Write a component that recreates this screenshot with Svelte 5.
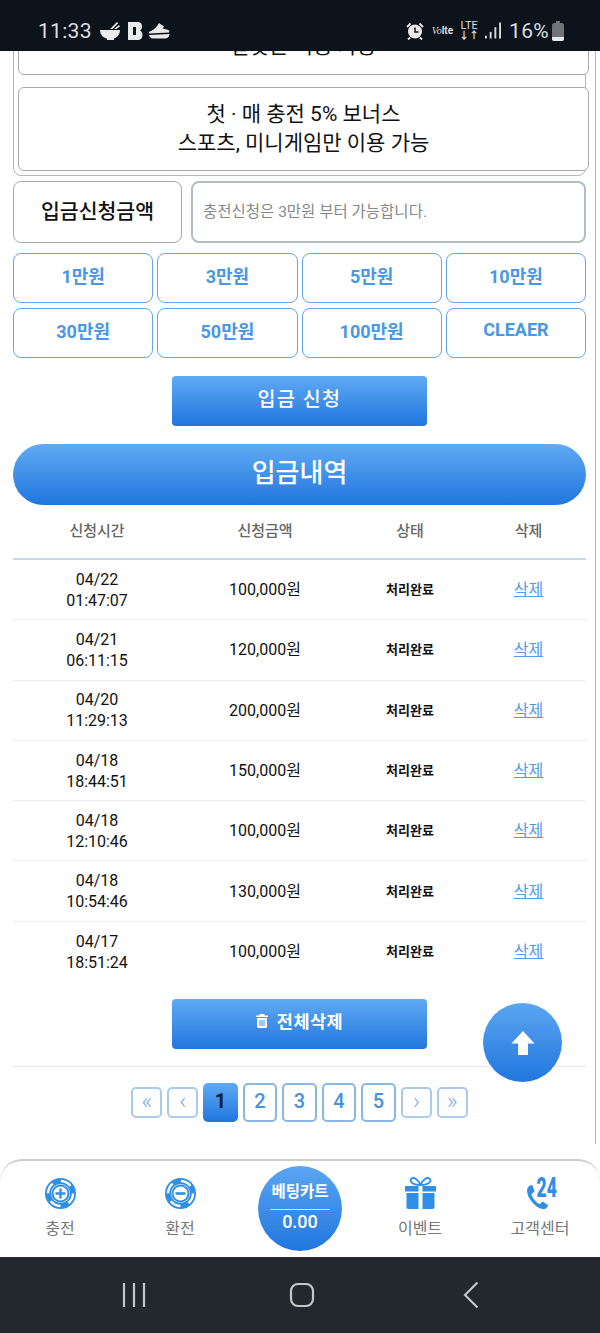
<script>
    const amounts = ["1만원", "3만원", "5만원", "10만원", "30만원", "50만원", "100만원", "CLEAER"];
    const rows = [
        ["04/22", "01:47:07", "100,000원"],
        ["04/21", "06:11:15", "120,000원"],
        ["04/20", "11:29:13", "200,000원"],
        ["04/18", "18:44:51", "150,000원"],
        ["04/18", "12:10:46", "100,000원"],
        ["04/18", "10:54:46", "130,000원"],
        ["04/17", "18:51:24", "100,000원"],
    ];
    const pages = ["1", "2", "3", "4", "5"];
</script>

<div class="phone">
    <div class="status">
        <div class="status-left">
            <span class="clock">11:33</span>
            <svg width="24" height="20" viewBox="0 0 24 20" fill="#e8eaec">
                <path d="M1 9h20c0 5-3 7.500-6 8.500v1.500H8v-1.500C4 16.500 1 14 1 9z"/>
                <path d="M11 8l7-7 1.200 1.200L13.500 8zM15 8l5-4 1 1.300L17.500 8z"/>
            </svg>
            <svg width="15" height="20" viewBox="0 0 15 20">
                <path d="M0 1h9c4 0 5 2 5 4.500 0 2-1 3.500-2 4 1.500.7 2.500 2 2.500 4.500 0 3-2 5-5 5H0z" fill="#e8eaec"/>
                <rect x="5" y="6" width="3" height="8" fill="#0d131a"/>
            </svg>
            <svg width="22" height="18" viewBox="0 0 22 18" fill="#e8eaec">
                <path d="M11 1l5 3.500-1.500 2 6 1.500c1 .8 1 2 .5 2.500L1 11.500c-.3-.8-.2-1.500.3-2 3.500-.5 7-4 9.700-8.500z"/>
                <path d="M1 13l20.500-1c0 2.500-1.500 4-4 4.500H5c-2 0-3.500-1.500-4-3.500z"/>
            </svg>
        </div>
        <div class="status-right">
            <svg width="18" height="18" viewBox="0 0 18 18">
                <circle cx="9" cy="9.500" r="7" fill="#e8eaec"/>
                <path d="M9 5.500v4.500h3.500" fill="none" stroke="#0d131a" stroke-width="1.500"/>
                <path d="M1 5l3.500-3.500M17 5l-3.500-3.500M4 15.500l-2 2M14 15.500l2 2" stroke="#e8eaec" stroke-width="1.800"/>
            </svg>
            <span class="volte"><i>Vo</i>lte</span>
            <span class="lte">LTE<small>↓↑</small></span>
            <svg class="signal" width="16" height="17" viewBox="0 0 17 17" fill="#d8dbde">
                <rect x="0" y="14" width="2" height="3"/>
                <rect x="5" y="10" width="2" height="7"/>
                <rect x="10" y="5" width="2" height="12"/>
                <rect x="15" y="0" width="2" height="17"/>
            </svg>
            <span class="clock">16%</span>
            <svg class="battery" width="12" height="20" viewBox="0 0 12 20">
                <path d="M4 0h4v2h2c1 0 2 1 2 2v14c0 1-1 2-2 2H2c-1 0-2-1-2-2V4c0-1 1-2 2-2h2z" fill="#6f7478"/>
                <path d="M0 16h12v2c0 1-1 2-2 2H2c-1 0-2-1-2-2z" fill="#e8eaec"/>
            </svg>
        </div>
    </div>

    <div class="viewport">
        <main>
            <div class="notice-box">
                <div class="notice notice-first">알맞은 이용 가능</div>
                <div class="notice">첫 · 매 충전 5% 보너스<br/>스포츠, 미니게임만 이용 가능</div>
            </div>

            <div class="amount-row">
                <div class="amount-label">입금신청금액</div>
                <input class="amount-input" placeholder="충전신청은 3만원 부터 가능합니다."/>
            </div>

            <div class="amount-grid">
                {#each amounts as a}
                    <button class="amount-btn">{a}</button>
                {/each}
            </div>

            <button class="action">입금 신청</button>

            <div class="pill">입금내역</div>

            <div class="tr th">
                <div>신청시간</div>
                <div>신청금액</div>
                <div>상태</div>
                <div>삭제</div>
            </div>
            {#each rows as r, i}
                <div class="tr" class:last={i === rows.length - 1}>
                    <div class="when">{r[0]}<br/>{r[1]}</div>
                    <div class="money">{r[2]}</div>
                    <div class="state">처리완료</div>
                    <div class="del"><a href="#del">삭제</a></div>
                </div>
            {/each}

            <button class="action action-del">
                <svg width="12" height="14" viewBox="0 0 12 14">
                    <path d="M0 1.500h3.500V0h5v1.500H12V3H0zM1 4h10v8.500c0 .8-.7 1.500-1.500 1.500h-7C1.700 14 1 13.300 1 12.500z" fill="#fff"/>
                    <path d="M4 6v6M6 6v6M8 6v6" stroke="#3f8fe8" stroke-width="1"/>
                </svg>
                전체삭제
            </button>

            <hr/>

            <div class="pager">
                <span class="pg">«</span>
                <span class="pg">‹</span>
                {#each pages as p, i}
                    <span class="pg num" class:active={i === 0}>{p}</span>
                {/each}
                <span class="pg">›</span>
                <span class="pg">»</span>
            </div>
        </main>

        <button class="to-top" aria-label="top">
            <svg width="24" height="26" viewBox="0 0 24 26">
                <path d="M12 1l11.500 12.500H17V25H7V13.500H.5z" fill="#fff"/>
            </svg>
        </button>
    </div>

    <nav>
        <div class="nav-item">
            <svg width="33" height="33" viewBox="0 0 33 33">
                <circle cx="16.500" cy="16.500" r="15.500" fill="#2f8fe8"/>
                <circle cx="16.500" cy="16.500" r="12.500" fill="none" stroke="#fff" stroke-width="2.400" stroke-dasharray="11 8.630"/>
                <circle cx="16.500" cy="16.500" r="9.500" fill="#fff"/>
                <circle cx="16.500" cy="16.500" r="8" fill="none" stroke="#2f8fe8" stroke-width="2"/>
                <path d="M16.500 11.500v10M11.500 16.500h10" stroke="#2f8fe8" stroke-width="2.400"/>
            </svg>
            <span>충전</span>
        </div>
        <div class="nav-item">
            <svg width="33" height="33" viewBox="0 0 33 33">
                <circle cx="16.500" cy="16.500" r="15.500" fill="#2f8fe8"/>
                <circle cx="16.500" cy="16.500" r="12.500" fill="none" stroke="#fff" stroke-width="2.400" stroke-dasharray="11 8.630"/>
                <circle cx="16.500" cy="16.500" r="9.500" fill="#fff"/>
                <circle cx="16.500" cy="16.500" r="8" fill="none" stroke="#2f8fe8" stroke-width="2"/>
                <path d="M11.500 16.500h10" stroke="#2f8fe8" stroke-width="2.600"/>
            </svg>
            <span>환전</span>
        </div>
        <div class="nav-item">
            <div class="cart">
                <b>베팅카트</b>
                <em>0.00</em>
            </div>
        </div>
        <div class="nav-item">
            <svg width="33" height="33" viewBox="0 0 33 33">
                <path d="M16.500 8C14 2 10 0 7.500 1.500 5 3 7 8 16.500 8zM16.500 8C19 2 23 0 25.500 1.500 28 3 26 8 16.500 8z" fill="none" stroke="#2f8fe8" stroke-width="1.800"/>
                <path d="M1 9h13.500v5.500H1zM18.500 9H32v5.500H18.500zM2.500 16h12v16h-10c-1.200 0-2-.8-2-2zM18.500 16h12v14c0 1.200-.8 2-2 2h-10z" fill="#2f8fe8"/>
            </svg>
            <span>이벤트</span>
        </div>
        <div class="nav-item">
            <div class="phone-icon">
                <svg width="25" height="27" viewBox="0 0 25 30">
                    <path d="M5 2.500C2 4 .5 6 1 10c1 8 9 17 17 19 3 .5 5-1 6-3.500.3-1-.1-1.500-1-2l-4-2.500c-.8-.5-1.500-.3-2 .3L15.500 23c-.6.6-1 .6-1.700.1C10 20.500 7.500 17 6 13.500c-.3-.7-.2-1.200.4-1.700l2-1.500c.7-.5.8-1.200.5-2L7 3c-.4-.9-1.100-1-2-.5z" fill="#2f8fe8"/>
                </svg>
                <span class="h24">24</span>
            </div>
            <span>고객센터</span>
        </div>
    </nav>

    <div class="sysnav">
        <svg width="24" height="26" viewBox="0 0 24 26" stroke="#c4c6c8" stroke-width="2.200">
            <path d="M2 1v24M12 1v24M22 1v24"/>
        </svg>
        <svg width="26" height="26" viewBox="0 0 26 26">
            <rect x="2" y="2" width="22" height="22" rx="7" fill="none" stroke="#c4c6c8" stroke-width="2.200"/>
        </svg>
        <svg width="16" height="28" viewBox="0 0 16 28">
            <path d="M14.500 1.500L2 14l12.500 12.500" fill="none" stroke="#c4c6c8" stroke-width="2.200"/>
        </svg>
    </div>
</div>

<style>
    :global(body) {
        background: #fff;
    }

    .phone {
        width: 600px;
        height: 1333px;
        display: flex;
        flex-direction: column;
        overflow: hidden;
        font-family: Roboto, "Noto Sans CJK KR", sans-serif;
        color: #111;
        background: #fff;
    }

    .status {
        height: 51px;
        flex: none;
        display: flex;
        justify-content: space-between;
        align-items: center;
        padding: 10px 36px 0 38px;
        box-sizing: border-box;
        background: #0d131a;
        color: #dcdfe2;
        position: relative;
        z-index: 2;
    }

    .status-left,
    .status-right {
        display: flex;
        align-items: center;
        gap: 5px;
    }

    .status-right {
        gap: 0;
    }

    .clock {
        font-size: 21px;
        letter-spacing: 0.3px;
    }

    .status-left .clock {
        margin-right: 2px;
    }

    .volte {
        font-size: 10px;
        font-weight: 700;
        margin: 0 6px 0 8px;
    }

    .volte i {
        font-weight: 400;
        font-family: "Liberation Serif", serif;
    }

    .lte {
        display: flex;
        flex-direction: column;
        align-items: center;
        font-size: 11px;
        line-height: 11px;
        margin-right: 6px;
    }

    .lte small {
        font-size: 10px;
        font-weight: 700;
        line-height: 10px;
    }

    .signal {
        margin-right: 8px;
    }

    .battery {
        margin-left: 3px;
    }

    .viewport {
        flex: 1;
        position: relative;
        overflow: hidden;
        border-right: 1px solid #bbb;
        margin-right: 4px;
        margin-bottom: 15px;
    }

    main {
        margin-top: -39px;
        padding: 0 0 0 13px;
        width: 573px;
    }

    .notice-box {
        border: 1px solid #b5b5b5;
        border-radius: 8px;
        padding: 4px 0 4px 4px;
        width: 573px;
        box-sizing: border-box;
    }

    .notice {
        width: 571px;
        height: 84px;
        box-sizing: border-box;
        border: 1px solid #aaa;
        border-radius: 6px;
        background: #fff;
        display: flex;
        align-items: center;
        justify-content: center;
        text-align: center;
        font-size: 21px;
        line-height: 29px;
    }

    .notice-first {
        height: 58px;
        margin-bottom: 12px;
        align-items: flex-start;
        padding-top: 14px;
    }

    .amount-row {
        display: flex;
        gap: 9px;
        margin-top: 5px;
    }

    .amount-label {
        width: 169px;
        height: 62px;
        box-sizing: border-box;
        border: 1px solid #aaa;
        border-radius: 8px;
        display: flex;
        align-items: center;
        justify-content: center;
        font-size: 20.500px;
        font-weight: 500;
        padding-bottom: 5px;
    }

    .amount-input {
        flex: 1;
        min-width: 0;
        height: 62px;
        box-sizing: border-box;
        border: 2px solid #b4bcc4;
        border-radius: 8px;
        padding: 0 10px;
        font-family: inherit;
        font-size: 15.500px;
        outline: none;
    }

    .amount-input::placeholder {
        color: #888;
    }

    .amount-grid {
        display: grid;
        grid-template-columns: repeat(4, 1fr);
        gap: 5px 4px;
        margin-top: 10px;
    }

    .amount-btn {
        height: 50px;
        border: 1px solid #60a6ea;
        border-radius: 8px;
        background: #fff;
        color: #4a97e6;
        font-family: inherit;
        font-size: 18px;
        font-weight: 700;
        padding: 0 0 7px;
    }

    .action {
        display: flex;
        align-items: center;
        justify-content: center;
        gap: 9px;
        width: 255px;
        height: 50px;
        margin: 18px auto 0;
        border: none;
        border-radius: 4px;
        background: linear-gradient(#60aaf4, #2176de);
        color: #fff;
        font-family: inherit;
        font-size: 19.500px;
        font-weight: 500;
        letter-spacing: 1.500px;
        padding: 0 0 7px;
    }

    .pill {
        height: 61px;
        margin-top: 18px;
        border-radius: 31px;
        background: linear-gradient(#60aaf4, #2176de);
        color: #fff;
        display: flex;
        align-items: center;
        justify-content: center;
        font-size: 26px;
        font-weight: 500;
        padding-bottom: 9px;
        box-sizing: border-box;
    }

    .tr {
        display: grid;
        grid-template-columns: 168px 168px 122px 115px;
        height: 60.300px;
        box-sizing: border-box;
        align-items: center;
        text-align: center;
        border-bottom: 1px solid #eee;
        font-size: 16px;
    }

    .tr.last {
        border-bottom: none;
    }

    .th {
        height: 55px;
        padding-bottom: 4px;
        border-bottom: 2px solid #c8d8e6;
        color: #666;
        font-size: 15px;
        font-weight: 500;
    }

    .when {
        line-height: 21px;
    }

    .money,
    .del {
        padding-bottom: 3px;
    }

    .state {
        font-size: 13px;
        font-weight: 700;
        padding-bottom: 2px;
    }

    .tr a {
        color: #4f9ee6;
    }

    .action-del {
        margin-top: 17px;
        font-size: 17.500px;
        font-weight: 700;
        letter-spacing: 0.5px;
    }

    hr {
        border: none;
        border-top: 1px solid #e8e8e8;
        margin: 17px 0 0;
    }

    .pager {
        display: flex;
        align-items: center;
        justify-content: center;
        gap: 5px;
        margin: 16px 0 0;
    }

    .pg {
        width: 31px;
        height: 31px;
        box-sizing: border-box;
        display: flex;
        align-items: center;
        justify-content: center;
        padding-bottom: 3px;
        border: 2px solid #a9cbee;
        border-radius: 5px;
        background: #fff;
        color: #7fb1e6;
        font-size: 24px;
        font-weight: 300;
    }

    .num {
        width: 34.500px;
        height: 39px;
        border-color: #8ab6e2;
        color: #4a90dc;
        font-size: 20px;
        font-weight: 500;
    }

    .active {
        border: none;
        background: linear-gradient(#60aaf4, #2176de);
        color: #0b1b33;
        font-weight: 700;
    }

    .to-top {
        position: absolute;
        left: 483px;
        top: 952px;
        width: 79px;
        height: 79px;
        border: none;
        border-radius: 50%;
        padding: 0;
        display: flex;
        align-items: center;
        justify-content: center;
        background: linear-gradient(#5ba6f1, #2176de);
    }

    nav {
        flex: none;
        height: 98px;
        box-sizing: border-box;
        display: flex;
        border-top: 2px solid #ccc;
        border-radius: 22px 22px 0 0;
        background: #fff;
    }

    .nav-item {
        width: 120px;
        display: flex;
        flex-direction: column;
        align-items: center;
        padding-top: 16px;
        gap: 6px;
        color: #777;
        font-size: 16px;
    }

    .nav-item > span {
        line-height: 26px;
    }

    .cart {
        width: 84px;
        height: 85px;
        margin-top: -11px;
        border-radius: 50%;
        background: linear-gradient(#5ba6f1, #2176de);
        color: #fff;
        display: flex;
        flex-direction: column;
        align-items: center;
        padding-top: 15px;
        box-sizing: border-box;
    }

    .cart b {
        width: 60px;
        text-align: center;
        white-space: nowrap;
        font-size: 15.500px;
        line-height: 22px;
        padding-bottom: 6px;
        border-bottom: 1px solid #cfe3fa;
    }

    .cart em {
        font-style: normal;
        font-weight: 500;
        font-size: 18px;
        line-height: 23px;
    }

    .phone-icon {
        width: 36px;
        height: 33px;
        position: relative;
        margin-left: 6px;
    }

    .phone-icon svg {
        position: absolute;
        left: 0;
        bottom: 0;
    }

    .h24 {
        position: absolute;
        right: -1px;
        top: -3px;
        color: #2f8fe8;
        font-size: 27px;
        font-weight: 900;
        line-height: 28px;
        transform: scaleX(0.65);
    }

    .sysnav {
        flex: none;
        height: 75px;
        background: #23282e;
        display: flex;
        align-items: center;
        padding-bottom: 1px;
    }

    .sysnav svg:nth-child(1) {
        margin-left: 122px;
    }

    .sysnav svg:nth-child(2) {
        margin-left: 143px;
    }

    .sysnav svg:nth-child(3) {
        margin-left: 148px;
    }
</style>
